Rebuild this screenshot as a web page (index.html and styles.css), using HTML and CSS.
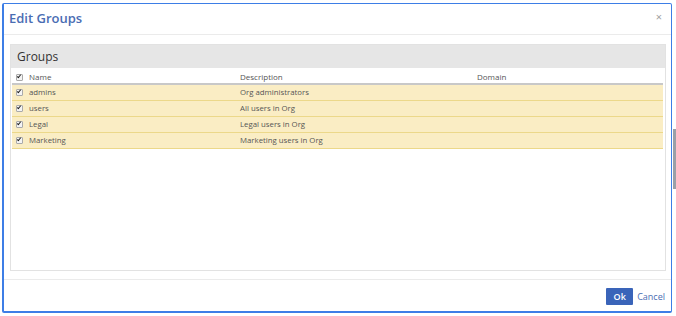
FILE: index.html
```html
<!DOCTYPE html>
<html lang="en">
<head>
  <meta charset="UTF-8">
  <title>Edit Groups</title>
  <link rel="stylesheet" href="styles.css">
</head>
<body>
  <div class="Modal">
    <div class="Modal__header">
      <h1 class="Modal__title">Edit Groups</h1>
      <span class="Modal__close">&times;</span>
    </div>
    <div class="Modal__body">
      <div class="Panel">
        <div class="Panel__heading">Groups</div>
        <table class="Grid">
          <thead>
            <tr>
              <th class="Grid__check"><span class="Check"></span></th>
              <th class="Grid__name">Name</th>
              <th class="Grid__desc">Description</th>
              <th>Domain</th>
            </tr>
          </thead>
          <tbody>
            <tr>
              <td class="Grid__check"><span class="Check"></span></td>
              <td>admins</td>
              <td>Org administrators</td>
              <td></td>
            </tr>
            <tr>
              <td class="Grid__check"><span class="Check"></span></td>
              <td>users</td>
              <td>All users in Org</td>
              <td></td>
            </tr>
            <tr>
              <td class="Grid__check"><span class="Check"></span></td>
              <td>Legal</td>
              <td>Legal users in Org</td>
              <td></td>
            </tr>
            <tr>
              <td class="Grid__check"><span class="Check"></span></td>
              <td>Marketing</td>
              <td>Marketing users in Org</td>
              <td></td>
            </tr>
          </tbody>
        </table>
      </div>
    </div>
    <div class="Modal__footer">
      <button class="Btn Btn--primary">Ok</button>
      <button class="Btn Btn--link">Cancel</button>
    </div>
  </div>
  <div class="Scrollbar"></div>
</body>
</html>
```

FILE: styles.css
```css
*,
*::before,
*::after {
  box-sizing: border-box;
}
html, body {
  margin: 0;
  padding: 0;
  background: #fff;
  font-family: "Open Sans", "Liberation Sans", sans-serif;
}
body {
  position: relative;
  width: 676px;
  height: 316px;
  padding: 3px 4px 3px 2px;
}

.Modal {
  display: flex;
  flex-direction: column;
  width: 670px;
  height: 310px;
  border: 1px solid #3d7ee6;
  border-left-width: 2px;
  border-bottom-width: 2px;
  border-radius: 2px;
  background: #fff;
}
.Modal__header {
  display: flex;
  align-items: center;
  justify-content: space-between;
  height: 31px;
  padding: 0 9px 2px 5px;
  border-bottom: 1px solid #ebebeb;
}
.Modal__title {
  margin: 0;
  font-size: 13px;
  font-weight: 600;
  color: #4a6db3;
}
.Modal__close {
  margin-top: -3px;
  font-size: 11px;
  color: #a0a0a0;
}
.Modal__body {
  flex: 1;
  padding: 9px 5px 8px 6px;
}
.Panel {
  height: 100%;
  border: 1px solid #e2e2e2;
}
.Panel__heading {
  height: 23px;
  padding: 3px 6px;
  background: #e6e6e6;
  font-size: 12px;
  color: #333;
}
.Grid {
  width: 651px;
  margin-left: 1px;
  border-collapse: collapse;
  font-size: 7.8px;
  color: #555;
}
.Grid th {
  height: 16px;
  padding: 1px 0 0;
  border-bottom: 2px solid #c8c8c8;
  color: #555;
  font-size: 8px;
  font-weight: 400;
  text-align: left;
}
.Grid td {
  height: 16px;
  padding: 0;
  border-bottom: 1px solid #ecd88a;
  background: #faedc4;
}
.Grid__check {
  width: 17px;
  padding-left: 4px !important;
}
.Grid__name {
  width: 211px;
}
.Grid__desc {
  width: 237px;
}
.Check {
  display: inline-block;
  position: relative;
  width: 7px;
  height: 7px;
  border: 1px solid #aaa;
  border-radius: 1px;
  background: #f4f4f4;
  vertical-align: -1px;
}
.Check::after {
  content: '';
  position: absolute;
  left: 1px;
  top: -1px;
  width: 2px;
  height: 4px;
  border: solid #222;
  border-width: 0 1.5px 1.5px 0;
  transform: rotate(40deg);
}
.Modal__footer {
  display: flex;
  align-items: center;
  justify-content: flex-end;
  gap: 4px;
  height: 32px;
  padding: 1px 6px 0;
  border-top: 1px solid #ebebeb;
}
.Btn {
  border: 0;
  font-family: inherit;
  font-size: 9px;
  cursor: pointer;
}
.Btn--primary {
  width: 27px;
  height: 17px;
  border-radius: 1px;
  background: #3a64b9;
  color: #fff;
  font-weight: 600;
}
.Btn--link {
  padding: 0;
  background: none;
  color: #4a6db3;
}
.Scrollbar {
  position: absolute;
  top: 129px;
  right: 0;
  width: 3px;
  height: 60px;
  background: #9aa0a8;
}
```
